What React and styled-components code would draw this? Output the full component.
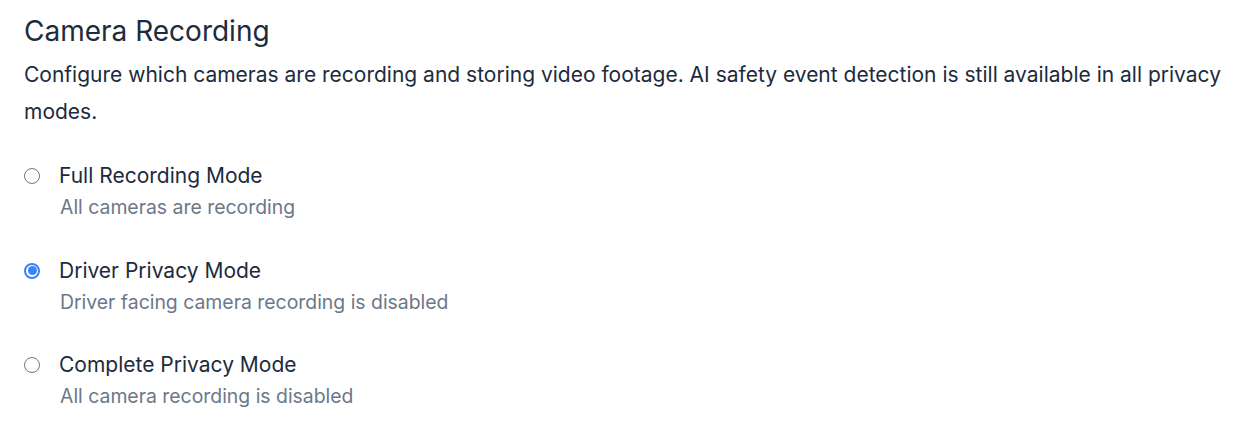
import React, { useState } from "react";
import styled, { createGlobalStyle } from "styled-components";

const Global = createGlobalStyle`
  html, body { margin: 0; padding: 0; background: #ffffff; }
  body { font-family: Inter, "Noto Sans", sans-serif; -webkit-font-smoothing: antialiased; }
`;

const Page = styled.div`
  padding: 12px 14px 0 24px;
  color: #1e293b;
`;

const Title = styled.h2`
  margin: 0;
  font-size: 28px;
  font-weight: 400;
  line-height: 38px;
  color: #1c2b3d;
`;

const Description = styled.p`
  margin: 6px 0 0 0;
  font-size: 21px;
  line-height: 37px;
  color: #1c2b3d;
`;

const Options = styled.div`
  display: flex;
  flex-direction: column;
  gap: 32.5px;
  margin-top: 30px;
`;

const Option = styled.label`
  display: grid;
  grid-template-columns: 16px 1fr;
  column-gap: 19px;
  row-gap: 0px;
  align-items: center;
  cursor: pointer;
`;

const Radio = styled.span`
  box-sizing: border-box;
  width: 16px;
  height: 16px;
  border-radius: 50%;
  border: ${(p) => (p.$checked ? "2px solid #3b82f6" : "1.5px solid #767676")};
  display: flex;
  align-items: center;
  justify-content: center;
  &::after {
    content: "";
    display: ${(p) => (p.$checked ? "block" : "none")};
    width: 9px;
    height: 9px;
    border-radius: 50%;
    background: #3b82f6;
  }
`;

const Label = styled.span`
  font-size: 21px;
  line-height: 32px;
  color: #1c2b3d;
`;

const Sub = styled.span`
  grid-column: 2;
  font-size: 19.4px;
  line-height: 30px;
  color: #6b7889;
  margin-left: 1px;
`;

const modes = [
  { id: "full", label: "Full Recording Mode", sub: "All cameras are recording" },
  { id: "driver", label: "Driver Privacy Mode", sub: "Driver facing camera recording is disabled" },
  { id: "complete", label: "Complete Privacy Mode", sub: "All camera recording is disabled" },
];

export default function App() {
  const [value, setValue] = useState("driver");
  return (
    <Page>
      <Global />
      <Title>Camera Recording</Title>
      <Description>
        Configure which cameras are recording and storing video footage. AI safety event detection is still available in all privacy modes.
      </Description>
      <Options>
        {modes.map((m) => (
          <Option key={m.id} onClick={() => setValue(m.id)}>
            <Radio $checked={value === m.id} />
            <Label>{m.label}</Label>
            <Sub>{m.sub}</Sub>
          </Option>
        ))}
      </Options>
    </Page>
  );
}
